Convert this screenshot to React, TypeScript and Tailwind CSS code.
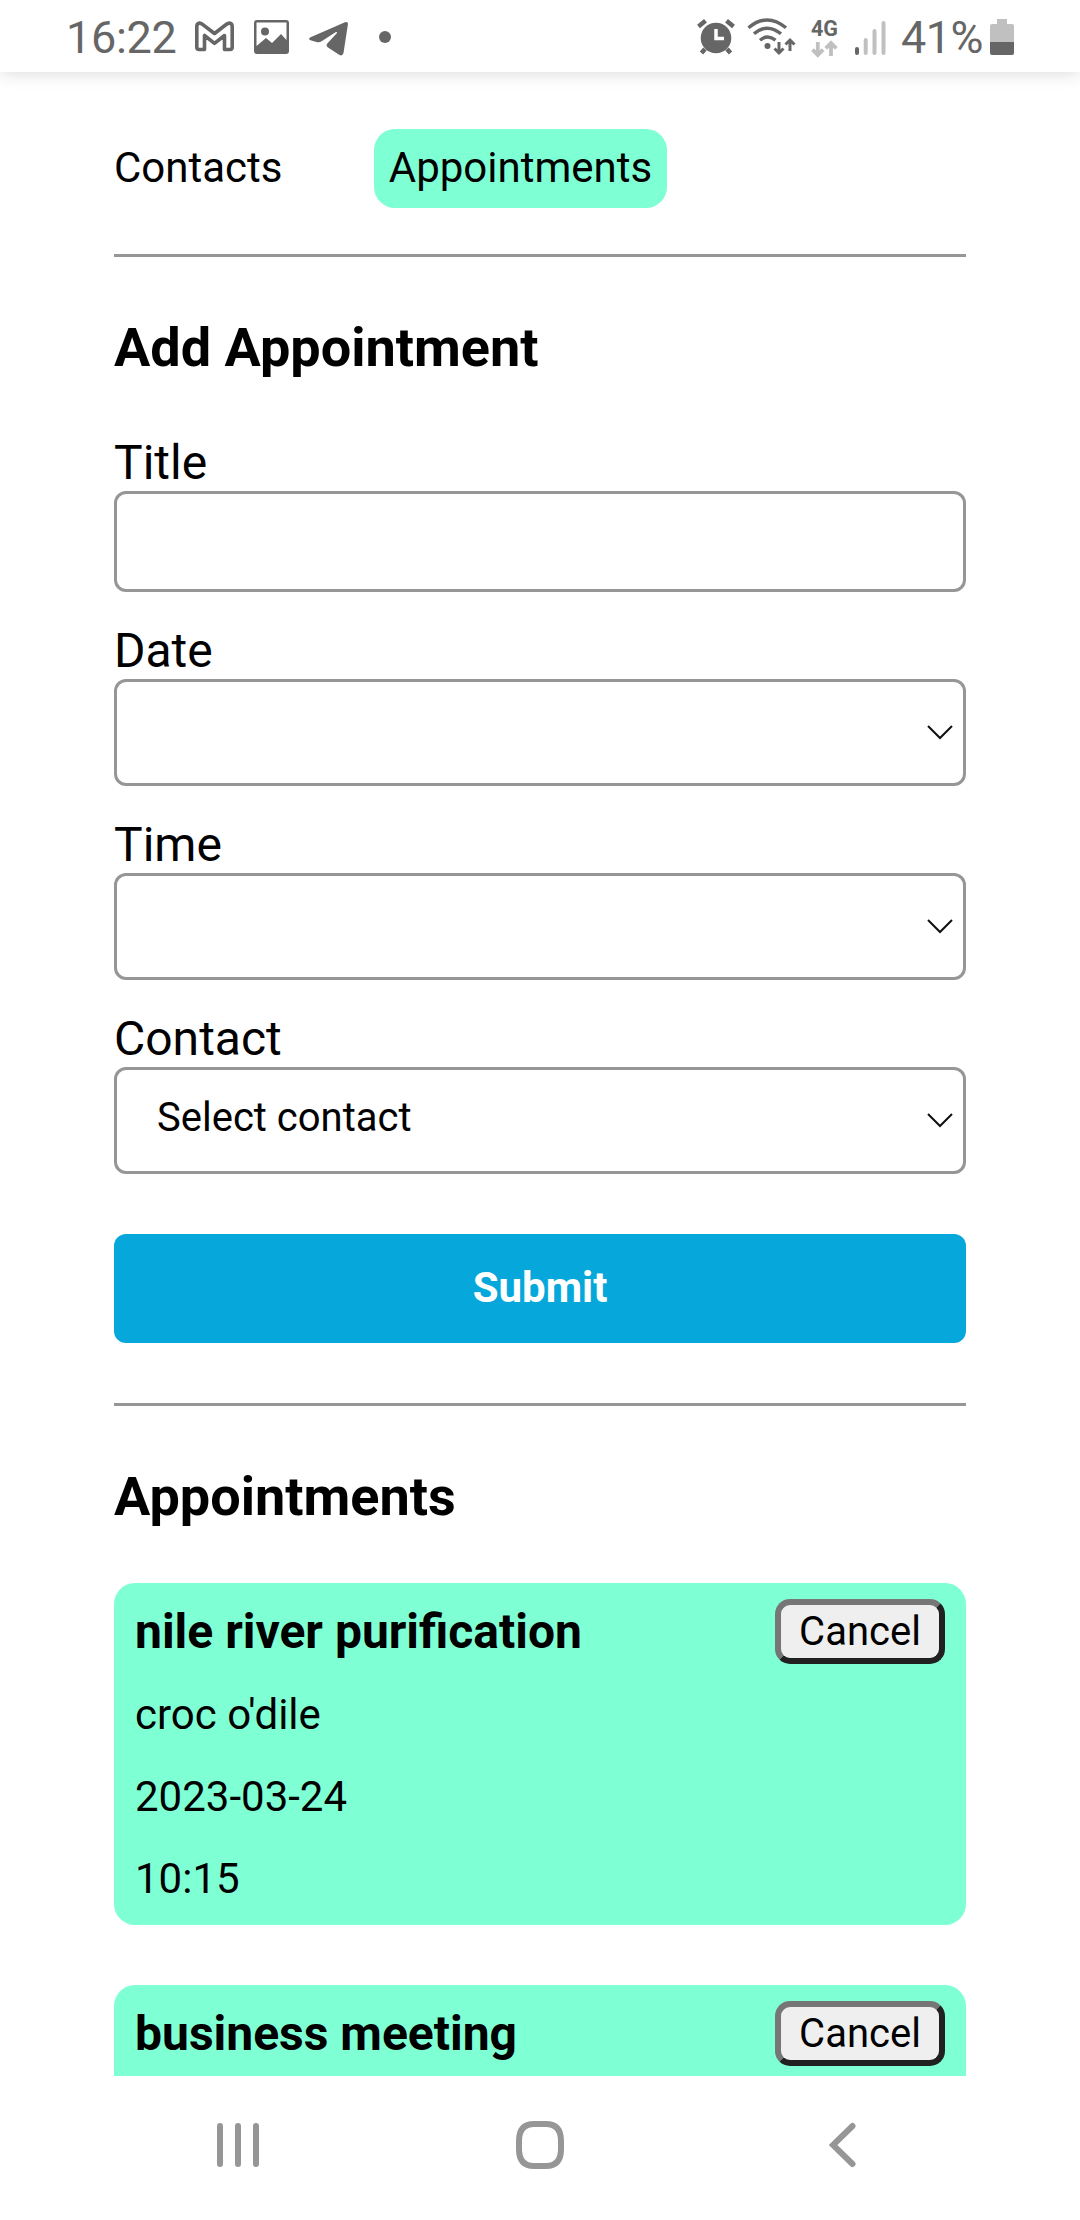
import type { ReactNode } from "react";

const appointments = [
  { title: "nile river purification", contact: "croc o'dile", date: "2023-03-24", time: "10:15" },
  { title: "business meeting", contact: "", date: "", time: "" },
];

function StatusBar() {
  return (
    <header className="relative z-10 flex h-[72px] shrink-0 justify-between bg-white pl-[66px] pr-[66px] text-[45px] leading-[76px] text-[#666] shadow-[0_0_17px_rgba(0,0,0,0.17)]">
      <div className="flex">
        <span className="w-[129px] tracking-[-0.3px]">16:22</span>
        <svg className="mt-[20px] h-[34px] w-[40px]" viewBox="0 0 40 34" fill="none" stroke="#666" strokeWidth="3.600" strokeLinejoin="round">
          <path d="M1.800 6.500C1.800 2.800 5 2.300 7.500 4.300L19.500 13.500L31.500 4.300C34 2.300 37.200 2.800 37.200 6.500V27Q37.200 29.500 35 29.500H29.500V15.500L19.500 23.300L9.500 15.500V29.500H4Q1.800 29.500 1.800 27Z" />
        </svg>
        <svg className="ml-[19px] mt-[20px] h-[34px] w-[35px]" viewBox="0 0 35 34">
          <path fill="#666" fillRule="evenodd" d="M3 0H32Q35 0 35 3V31Q35 34 32 34H3Q0 34 0 31V3Q0 0 3 0ZM2.500 2.500V26L12 18L18 23L27 14L32.500 20V2.500Z" />
          <circle cx="11" cy="11.500" r="4" fill="#666" />
        </svg>
        <svg className="ml-[20px] mt-[20px] h-[37px] w-[40px]" viewBox="0 0 40 37" fill="#666">
          <path d="M1.500 17.300L36 2.300Q39.300 1.200 38.900 4.500L34.500 33Q33.500 36.500 30.500 35L19 27.500Q16.500 25.500 18.500 23.200L28 13Q28.500 11.500 26.500 12.300L13 21Q10.500 22.700 7.500 22L1.500 20.200Q-1.200 19 1.500 17.300Z" />
        </svg>
        <svg className="ml-[30px] mt-[31px] size-[12px]" viewBox="0 0 12 12"><circle cx="6" cy="6" r="6" fill="#666" /></svg>
      </div>
      <div className="flex">
        <svg className="mt-[18px] h-[38px] w-[40px]" viewBox="0 0 40 38" fill="#666" stroke="#666" strokeWidth="4.500">
          <circle cx="20" cy="20" r="15.300" stroke="none" />
          <path d="M2.500 8.500L9.500 2.700M37.500 8.500L30.500 2.700M9 31L5.500 35M31 31L34.500 35" />
          <path d="M20 11V20.500H28" fill="none" stroke="#fff" strokeWidth="3.500" />
        </svg>
        <svg className="ml-[11px] mt-[18px] h-[38px] w-[49px]" viewBox="0 0 49 38" fill="none" stroke="#666" strokeWidth="3.400">
          <path d="M1.500 9.800Q20 -6 39 9.800M7 15.800Q20 4.500 34 15.800M13 22.200Q20.500 16 28.500 22.200" />
          <circle cx="20.500" cy="28" r="3" fill="#666" stroke="none" />
          <path d="M32 24V34.500M27.500 30.500L32 35L36.500 30.500M43 33V23M38.500 26.500L43 22L47.500 26.500" strokeWidth="3" />
        </svg>
        <div className="ml-[15px] mt-[17px] w-[28px]">
          <div className="h-[23px] text-[21.500px] font-bold leading-[23px]">4G</div>
          <svg className="h-[18px] w-[27px]" viewBox="0 0 27 18" fill="none" stroke="#c0c0c0" strokeWidth="3.800">
            <path d="M6.800 2V14M1.500 9.700L6.800 15L12.100 9.700M20 16V4M14.700 8.300L20 3L25.300 8.300" />
          </svg>
        </div>
        <svg className="ml-[16px] mt-[21px] h-[34px] w-[31px]" viewBox="0 0 31 34" strokeWidth="4" strokeLinecap="round" stroke="#c0c0c0">
          <path d="M2 28V32" stroke="#666" />
          <path d="M10.700 19V32M19.500 10V32M28.500 2V32" />
        </svg>
        <span className="ml-[15px] w-[89px] whitespace-nowrap tracking-[-0.5px]">41%</span>
        <svg className="mt-[19px] h-[36px] w-[24px]" viewBox="0 0 24 36">
          <path fill="#c0c0c0" d="M7 5V0H17V5H22Q24 5 24 7V23H0V7Q0 5 2 5Z" />
          <path fill="#666" d="M0 23H24V34Q24 36 22 36H2Q0 36 0 34Z" />
        </svg>
      </div>
    </header>
  );
}

function Field({ label, children, tall = true }: { label: string; children?: ReactNode; tall?: boolean }) {
  return (
    <label className="mb-[31px] block">
      <span className="block h-[56px] text-[48px] leading-[56px]">{label}</span>
      {tall ? (
        <span className="flex h-[107px] items-center justify-between rounded-[12px] border-[3px] border-[#969696] pl-[40px] pr-[10px] text-[40px]">
          <span className="pb-[7px] leading-[49px]">{children}</span>
          <svg className="h-[15px] w-[26px]" viewBox="0 0 26 15" fill="none" stroke="#111" strokeWidth="2">
            <path d="M1 1L13 13L25 1" />
          </svg>
        </span>
      ) : (
        <span className="block h-[101px] rounded-[12px] border-[3px] border-[#969696]" />
      )}
    </label>
  );
}

function AppointmentCard({ title, contact, date, time }: (typeof appointments)[number]) {
  return (
    <article className="mb-[60px] h-[342px] rounded-[21px] bg-[#7fffd4] px-[21px] pt-[16px]">
      <div className="mb-[10px] flex h-[65px] items-center justify-between">
        <h3 className="text-[48px] font-bold leading-[56px]">{title}</h3>
        <button className="h-[65px] w-[170px] rounded-[15px] border-[6px] border-b-[#212121] border-l-[#767676] border-r-[#212121] border-t-[#767676] bg-[#efefef] text-[40px] leading-[53px]">
          Cancel
        </button>
      </div>
      <p className="h-[82px] leading-[82px]">{contact}</p>
      <p className="h-[82px] leading-[82px]">{date}</p>
      <p className="h-[82px] leading-[82px]">{time}</p>
    </article>
  );
}

function NavigationBar() {
  return (
    <footer className="flex h-[144px] shrink-0 items-start bg-white pl-[217px] pt-[45px]">
      <svg className="mt-[1px] h-[46px] w-[42px]" viewBox="0 0 42 46" stroke="#969696" strokeWidth="6" strokeLinecap="round">
        <path d="M3 4V42M21 4V42M39 4V42" />
      </svg>
      <svg className="ml-[257px] size-[48px]" viewBox="0 0 48 48" fill="none" stroke="#969696" strokeWidth="6">
        <path d="M3 24V20Q3 3 18 3H30Q45 3 45 20V28Q45 45 30 45H18Q3 45 3 28Z" />
      </svg>
      <svg className="ml-[265px] mt-[1px] h-[46px] w-[27px]" viewBox="0 0 27 46" fill="none" stroke="#969696" strokeWidth="6" strokeLinecap="round">
        <path d="M23.500 4L4 23L23.500 42" />
      </svg>
    </footer>
  );
}

export default function App() {
  return (
    <div className="flex h-[2220px] w-[1080px] flex-col overflow-hidden bg-white font-['Roboto',sans-serif] text-black">
      <StatusBar />
      <main className="min-h-0 flex-1 overflow-hidden px-[114px] pt-[57px] text-[42px]">
        <nav className="flex h-[79px] items-center">
          <a className="w-[260px] pb-[2px] leading-[49px]">Contacts</a>
          <a className="flex h-[79px] w-[293px] justify-center rounded-[21px] bg-[#7fffd4] pt-[14px] leading-[49px]">Appointments</a>
        </nav>
        <hr className="mt-[46px] border-t-[3px] border-[#969696]" />
        <h2 className="mt-[59px] text-[54px] font-bold leading-[63px]">Add Appointment</h2>
        <form className="mt-[56px]">
          <Field label="Title" tall={false} />
          <Field label="Date" />
          <Field label="Time" />
          <Field label="Contact">Select contact</Field>
          <button type="button" className="mt-[29px] h-[109px] w-full rounded-[12px] bg-[#06a8db] pb-[2px] text-[42px] font-bold text-white">
            Submit
          </button>
        </form>
        <hr className="mt-[60px] border-t-[3px] border-[#969696]" />
        <h2 className="mb-[55px] mt-[59px] text-[54px] font-bold leading-[63px]">Appointments</h2>
        {appointments.map((item) => (
          <AppointmentCard key={item.title} {...item} />
        ))}
      </main>
      <NavigationBar />
    </div>
  );
}
